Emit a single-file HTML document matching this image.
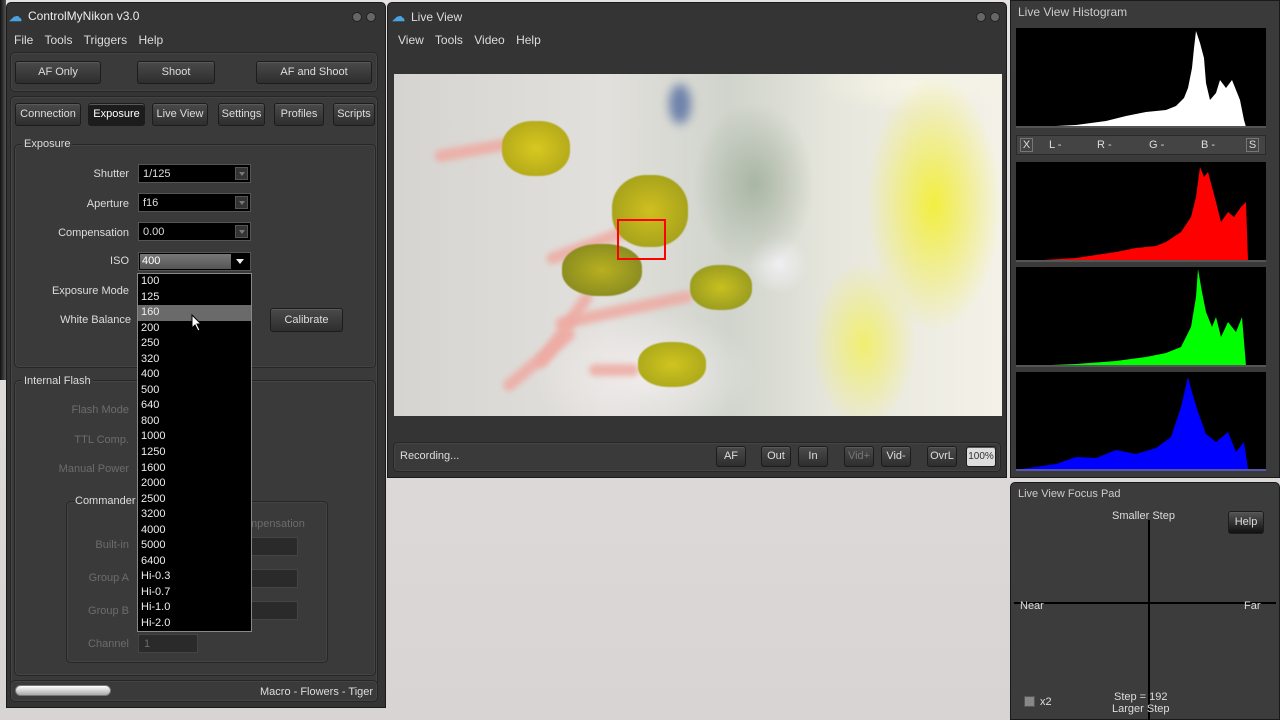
<!DOCTYPE html>
<html><head><meta charset="utf-8"><style>
*{margin:0;padding:0;box-sizing:border-box}
body{width:1280px;height:720px;overflow:hidden;position:relative;background:linear-gradient(#e6e2e2,#d8d4d4);font-family:"Liberation Sans",sans-serif;font-size:11px;color:#ddd}
.a{position:absolute}
.win{background:#343434;border:1px solid #1a1a1a}
.btn{position:absolute;background:linear-gradient(#4a4a4a,#2e2e2e);border:1px solid #1c1c1c;border-radius:3px;color:#ddd;text-align:center;box-shadow:inset 0 1px 0 #5a5a5a}
.grp{position:absolute;border:1px solid #262626;border-radius:5px;background:#3a3a3a;box-shadow:inset 0 0 0 1px #444}
.lbl{position:absolute;text-align:right;color:#ddd}
.dim{color:#6c6c6c}
.cb{position:absolute;background:#000;border:1px solid #555;color:#ddd;padding:3px 4px;height:19px}
.cb i{position:absolute;right:2px;top:2px;width:13px;height:13px;background:#333;border:1px solid #555}
.cb i:after{content:"";position:absolute;left:3px;top:4px;border:3px solid transparent;border-top:4px solid #777}
.iso div{height:15.55px;line-height:15px;padding-left:3px;color:#eee;font-size:11px}
.hist{position:absolute;left:1016px;width:250px;background:#000}
.st{position:absolute;height:12px;border-radius:7px;background:#eeaaa2;filter:blur(3px);opacity:.85}
.an{position:absolute;border-radius:45%;filter:blur(.6px)}
</style></head><body>
<div class="a" style="left:0;top:0;width:6px;height:380px;background:linear-gradient(90deg,#111,#555)"></div>
<div class="a win" style="left:6px;top:2px;width:380px;height:706px;border-radius:5px 5px 0 0"></div>
<div class="a" style="left:9px;top:9px;width:14px;height:14px;color:#4aa3e0;font-size:13px;font-weight:bold">&#9729;</div>
<div class="a" style="left:28px;top:9px;font-size:12px;color:#eee">ControlMyNikon v3.0</div>
<div class="a" style="left:352px;top:12px;width:10px;height:10px;border-radius:50%;background:#666;border:1px solid #222"></div>
<div class="a" style="left:366px;top:12px;width:10px;height:10px;border-radius:50%;background:#666;border:1px solid #222"></div>
<div class="a" style="left:14px;top:33px;font-size:12px;word-spacing:8px">File Tools Triggers Help</div>
<div class="grp" style="left:10px;top:52px;width:368px;height:40px"></div>
<div class="btn" style="left:15px;top:61px;width:86px;height:23px;line-height:21px">AF Only</div>
<div class="btn" style="left:137px;top:61px;width:78px;height:23px;line-height:21px">Shoot</div>
<div class="btn" style="left:256px;top:61px;width:116px;height:23px;line-height:21px">AF and Shoot</div>
<div class="grp" style="left:10px;top:96px;width:368px;height:590px"></div>
<div class="btn" style="left:15px;top:103px;width:66px;height:23px;line-height:21px">Connection</div>
<div class="btn" style="left:88px;top:103px;width:57px;height:23px;line-height:21px;background:#1c1c1c;color:#fff">Exposure</div>
<div class="btn" style="left:152px;top:103px;width:56px;height:23px;line-height:21px">Live View</div>
<div class="btn" style="left:218px;top:103px;width:47px;height:23px;line-height:21px">Settings</div>
<div class="btn" style="left:274px;top:103px;width:50px;height:23px;line-height:21px">Profiles</div>
<div class="btn" style="left:333px;top:103px;width:42px;height:23px;line-height:21px">Scripts</div>
<div class="grp" style="left:14px;top:144px;width:362px;height:224px"></div>
<div class="a" style="left:22px;top:138px;background:#3a3a3a;padding:0 2px">Exposure</div>
<div class="lbl" style="left:20px;top:168px;width:109px">Shutter</div>
<div class="lbl" style="left:20px;top:198px;width:109px">Aperture</div>
<div class="lbl" style="left:20px;top:227px;width:109px">Compensation</div>
<div class="lbl" style="left:20px;top:255px;width:109px">ISO</div>
<div class="lbl" style="left:20px;top:285px;width:109px">Exposure Mode</div>
<div class="lbl" style="left:20px;top:314px;width:111px">White Balance</div>
<div class="cb" style="left:138px;top:164px;width:113px">1/125<i></i></div>
<div class="cb" style="left:138px;top:193px;width:113px">f16<i></i></div>
<div class="cb" style="left:138px;top:222px;width:113px">0.00<i></i></div>
<div class="a" style="left:138px;top:252px;width:113px;height:19px;background:#000;border:1px solid #555"></div>
<div class="a" style="left:140px;top:254px;width:91px;height:15px;background:linear-gradient(#777,#555);color:#fff;padding-left:2px;line-height:15px">400</div>
<div class="a" style="left:236px;top:259px;border:4px solid transparent;border-top:5px solid #eee"></div>
<div class="btn" style="left:270px;top:308px;width:73px;height:24px;line-height:22px">Calibrate</div>
<div class="grp" style="left:14px;top:380px;width:362px;height:296px"></div>
<div class="a" style="left:22px;top:375px;background:#3a3a3a;padding:0 2px">Internal Flash</div>
<div class="lbl dim" style="left:20px;top:404px;width:109px">Flash Mode</div>
<div class="lbl dim" style="left:20px;top:434px;width:109px">TTL Comp.</div>
<div class="lbl dim" style="left:20px;top:463px;width:109px">Manual Power</div>
<div class="grp" style="left:66px;top:501px;width:262px;height:162px"></div>
<div class="a" style="left:75px;top:495px;background:#3a3a3a">Commander</div>
<div class="a dim" style="left:248px;top:518px">mpensation</div>
<div class="lbl dim" style="left:60px;top:539px;width:69px">Built-in</div>
<div class="lbl dim" style="left:60px;top:572px;width:69px">Group A</div>
<div class="lbl dim" style="left:60px;top:605px;width:69px">Group B</div>
<div class="lbl dim" style="left:60px;top:638px;width:69px">Channel</div>
<div class="a" style="left:250px;top:537px;width:48px;height:19px;background:#2a2a2a;border:1px solid #444"></div>
<div class="a" style="left:250px;top:569px;width:48px;height:19px;background:#2a2a2a;border:1px solid #444"></div>
<div class="a" style="left:250px;top:601px;width:48px;height:19px;background:#2a2a2a;border:1px solid #444"></div>
<div class="a dim" style="left:138px;top:634px;width:60px;height:19px;background:#2a2a2a;border:1px solid #444;padding:3px 5px">1</div>
<div class="a iso" style="left:137px;top:273px;width:115px;height:359px;background:#000;border:1px solid #888">
<div>100</div><div>125</div><div style="background:#6a6a6a">160</div><div>200</div><div>250</div><div>320</div><div>400</div><div>500</div><div>640</div><div>800</div><div>1000</div><div>1250</div><div>1600</div><div>2000</div><div>2500</div><div>3200</div><div>4000</div><div>5000</div><div>6400</div><div>Hi-0.3</div><div>Hi-0.7</div><div>Hi-1.0</div><div>Hi-2.0</div></div>
<svg class="a" style="left:191px;top:314px" width="12" height="18"><path d="M1 1 L1 14 L4 11 L7 17 L9 16 L6 10 L10 10 Z" fill="#fff" stroke="#000"/></svg>
<div class="grp" style="left:10px;top:680px;width:368px;height:22px"></div>
<div class="a" style="left:15px;top:685px;width:96px;height:11px;border-radius:6px;background:linear-gradient(#fff,#aaa);border:1px solid #777"></div>
<div class="a" style="left:260px;top:686px">Macro - Flowers - Tiger</div>

<div class="a win" style="left:387px;top:2px;width:620px;height:476px;border-radius:5px 5px 0 0"></div>
<div class="a" style="left:392px;top:9px;color:#4aa3e0;font-size:13px;font-weight:bold">&#9729;</div>
<div class="a" style="left:411px;top:10px;font-size:12px">Live View</div>
<div class="a" style="left:976px;top:12px;width:10px;height:10px;border-radius:50%;background:#666;border:1px solid #222"></div>
<div class="a" style="left:990px;top:12px;width:10px;height:10px;border-radius:50%;background:#666;border:1px solid #222"></div>
<div class="a" style="left:398px;top:33px;font-size:12px;word-spacing:8px">View Tools Video Help</div>
<div class="a" style="left:394px;top:74px;width:608px;height:342px;overflow:hidden;background:
radial-gradient(ellipse 90px 170px at 540px 130px,#f2ee40,transparent 75%),
radial-gradient(ellipse 70px 110px at 470px 270px,#f1ef70,transparent 75%),
radial-gradient(ellipse 80px 110px at 360px 110px,#a9b6a4,transparent 75%),
radial-gradient(ellipse 130px 40px at 520px 10px,#f6f4e6,transparent 75%),
radial-gradient(ellipse 40px 40px at 385px 190px,#f0eef2,transparent 75%),
radial-gradient(ellipse 140px 80px at 250px 300px,#f0ecec,transparent 80%),
linear-gradient(90deg,#d6d4d0,#e2e0dc 35%,#d0d4cc 55%,#e6e6dc 72%,#f4f2e8)">
<div class="a" style="left:275px;top:10px;width:22px;height:40px;border-radius:50%;background:#2a4a90;opacity:.6;filter:blur(5px)"></div>
<div class="st" style="left:40px;top:70px;width:80px;transform:rotate(-10deg)"></div>
<div class="st" style="left:150px;top:165px;width:90px;transform:rotate(-20deg)"></div>
<div class="st" style="left:125px;top:250px;width:90px;transform:rotate(-55deg)"></div>
<div class="st" style="left:160px;top:230px;width:140px;transform:rotate(-12deg)"></div>
<div class="st" style="left:100px;top:280px;width:90px;transform:rotate(-40deg)"></div>
<div class="st" style="left:195px;top:290px;width:50px"></div>
<div class="an" style="left:108px;top:47px;width:68px;height:55px;background:radial-gradient(#d8c820,#a8a018)"></div>
<div class="an" style="left:218px;top:101px;width:76px;height:72px;background:radial-gradient(#d0c020,#98981a)"></div>
<div class="an" style="left:168px;top:170px;width:80px;height:52px;background:radial-gradient(#b8b020,#7a8020)"></div>
<div class="an" style="left:296px;top:191px;width:62px;height:45px;background:radial-gradient(#c8c020,#8a9020)"></div>
<div class="an" style="left:244px;top:268px;width:68px;height:45px;background:radial-gradient(#d0c420,#a0a018)"></div>
<div class="a" style="left:223px;top:145px;width:49px;height:41px;border:2px solid #ff0000"></div>
</div>
<div class="grp" style="left:393px;top:442px;width:608px;height:30px"></div>
<div class="a" style="left:400px;top:450px">Recording...</div>
<div class="btn" style="left:716px;top:446px;width:30px;height:21px;line-height:19px">AF</div>
<div class="btn" style="left:761px;top:446px;width:30px;height:21px;line-height:19px">Out</div>
<div class="btn" style="left:798px;top:446px;width:30px;height:21px;line-height:19px">In</div>
<div class="btn" style="left:844px;top:446px;width:30px;height:21px;line-height:19px;color:#777">Vid+</div>
<div class="btn" style="left:881px;top:446px;width:30px;height:21px;line-height:19px">Vid-</div>
<div class="btn" style="left:927px;top:446px;width:30px;height:21px;line-height:19px">OvrL</div>
<div class="btn" style="left:966px;top:446px;width:30px;height:21px;line-height:19px;font-size:10px;background:#ddd;color:#333">100%</div>

<div class="a win" style="left:1010px;top:0;width:270px;height:478px;background:#3a3a3a"></div>
<div class="a" style="left:1018px;top:5px;font-size:12px;color:#ccc">Live View Histogram</div>
<div class="hist" style="top:28px;height:100px"><svg width="250" height="100"><polygon fill="#fff" points="20,99 60,97 90,93 110,88 130,84 150,82 160,78 168,70 172,60 176,40 178,20 180,3 184,15 188,30 190,55 194,72 200,65 204,52 210,60 216,52 220,62 224,72 228,92 230,99" /><rect y="98" width="250" height="2" fill="#555"/></svg></div>
<div class="a" style="left:1016px;top:135px;width:250px;height:20px;background:#444;border:1px solid #2a2a2a"></div>
<div class="a" style="left:1020px;top:138px;width:13px;height:14px;border:1px solid #777;text-align:center;line-height:12px">X</div>
<div class="a" style="left:1049px;top:139px">L -</div>
<div class="a" style="left:1097px;top:139px">R -</div>
<div class="a" style="left:1149px;top:139px">G -</div>
<div class="a" style="left:1201px;top:139px">B -</div>
<div class="a" style="left:1246px;top:138px;width:13px;height:14px;border:1px solid #777;text-align:center;line-height:12px">S</div>
<div class="hist" style="top:162px;height:100px"><svg width="250" height="100"><polygon fill="#f00" points="10,99 60,96 100,90 120,86 140,84 150,80 165,70 175,55 180,35 184,5 188,15 192,10 196,25 200,40 205,60 212,50 218,55 225,45 230,40 232,99" /><rect y="98" width="250" height="2" fill="#555"/></svg></div>
<div class="hist" style="top:267px;height:100px"><svg width="250" height="100"><polygon fill="#0f0" points="10,99 60,97 100,94 130,90 150,86 165,80 175,60 180,30 182,2 186,25 190,45 196,60 200,50 205,70 212,55 220,65 226,50 230,99" /><rect y="98" width="250" height="2" fill="#555"/></svg></div>
<div class="hist" style="top:372px;height:99px"><svg width="250" height="99"><polygon fill="#00f" points="5,97 40,92 60,85 80,86 100,78 120,82 140,76 155,65 165,35 172,5 176,20 182,40 190,62 200,70 212,60 220,80 228,70 232,97" /><rect y="97" width="250" height="2" fill="#55a"/></svg></div>

<div class="a win" style="left:1010px;top:482px;width:270px;height:238px;background:#3c3c3c;border-radius:5px 5px 0 0"></div>
<div class="a" style="left:1018px;top:488px;font-size:11px;color:#ccc">Live View Focus Pad</div>
<div class="a" style="left:1148px;top:520px;width:2px;height:200px;background:#000"></div>
<div class="a" style="left:1014px;top:602px;width:262px;height:2px;background:#000"></div>
<div class="a" style="left:1112px;top:510px">Smaller Step</div>
<div class="btn" style="left:1228px;top:511px;width:36px;height:23px;line-height:21px;background:linear-gradient(#555,#111)">Help</div>
<div class="a" style="left:1020px;top:600px">Near</div>
<div class="a" style="left:1244px;top:600px">Far</div>
<div class="a" style="left:1114px;top:691px">Step = 192</div>
<div class="a" style="left:1112px;top:703px">Larger Step</div>
<div class="a" style="left:1024px;top:696px;width:11px;height:11px;background:#888;border:1px solid #555"></div>
<div class="a" style="left:1040px;top:696px">x2</div>
</body></html>
